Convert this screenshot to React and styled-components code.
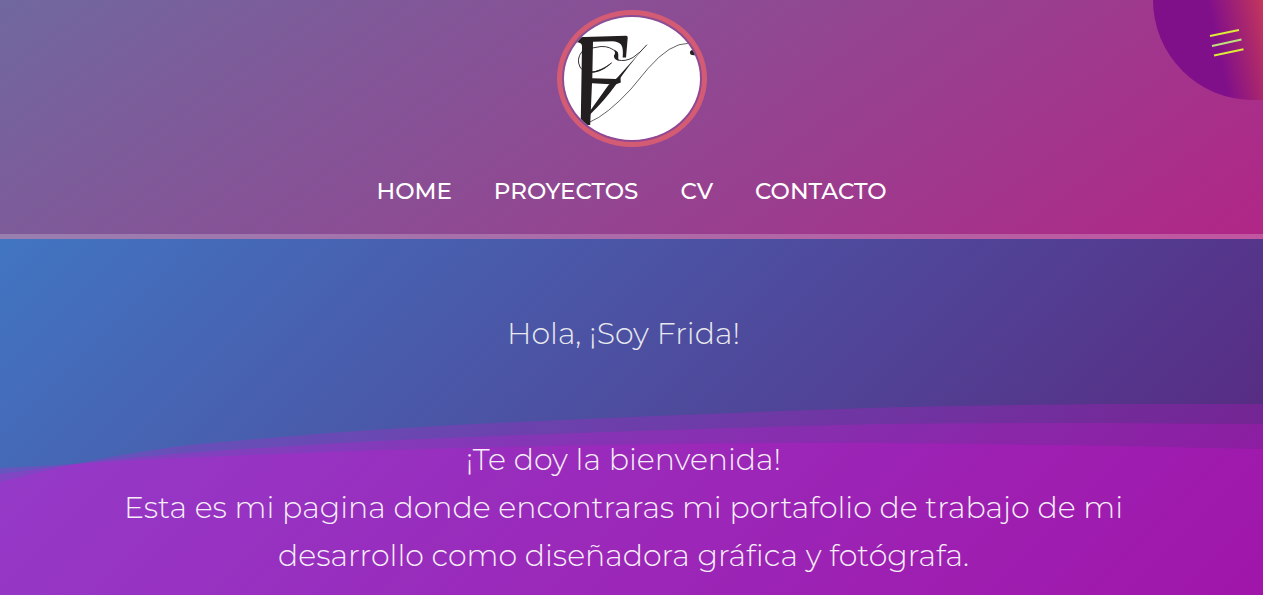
import React from "react";
import styled, { createGlobalStyle } from "styled-components";

const GlobalStyle = createGlobalStyle`
  * { box-sizing: border-box; }
  body {
    margin: 0;
    color: #fff;
    font-family: Montserrat, Inter, "Open Sans", sans-serif;
  }
`;

const Page = styled.div`
  position: relative;
  display: flex;
  flex-direction: column;
  min-height: 100vh;
  overflow: hidden;
`;

const Header = styled.header`
  display: flex;
  flex-direction: column;
  align-items: center;
  gap: 26px;
  padding: 10px 0 25px;
  border-bottom: 5px solid rgba(255, 255, 255, 0.22);
  background: linear-gradient(144deg, #70689e, #8c4c94 45%, #b12686) border-box;
`;

const LogoLink = styled.a`
  display: block;
  width: 150px;
  height: 137px;
  padding: 2px;
  border: 5px solid #d35b74;
  border-radius: 50%;

  svg {
    display: block;
    width: 100%;
    height: 100%;
    border-radius: 50%;
    background: #fff;
  }
`;

const Nav = styled.nav`
  display: flex;
  flex-wrap: wrap;
  justify-content: center;
  gap: 42px;
`;

const NavLink = styled.a`
  color: #fff;
  font-size: 23px;
  font-weight: 500;
  line-height: 36px;
  text-decoration: none;
`;

const MenuButton = styled.button`
  position: absolute;
  top: 0;
  right: 0;
  width: 110px;
  height: 100px;
  padding: 0;
  border: 0;
  border-radius: 0 0 0 100px;
  background: linear-gradient(78deg, #800f8a 58%, #c4365c);
  cursor: pointer;

  svg {
    display: block;
    width: 100%;
    height: 100%;
  }
`;

const Hero = styled.main`
  position: relative;
  flex: 1;
  padding: 71px 16px 16px 0;
  background: linear-gradient(135deg, #4175c1, #5a237b);
  text-align: center;
`;

const Waves = styled.svg`
  position: absolute;
  left: 0;
  bottom: 0;
  width: 100%;
  height: 192px;
`;

const Greeting = styled.h1`
  position: relative;
  margin: 0 0 78px;
  color: #e8e8ee;
  font-size: 30px;
  font-weight: 300;
  line-height: 48px;
`;

const Intro = styled.p`
  position: relative;
  max-width: 1040px;
  margin: 0 auto;
  color: #f6eef8;
  font-size: 30px;
  font-weight: 300;
  line-height: 48px;
`;

const waves = [
  [[0, 78], [75, 60], [140, 48], [200, 40], [420, 23], [840, 5], [1100, 0], [1263, 0]],
  [[0, 70], [75, 60], [140, 53], [200, 48], [420, 35], [840, 21], [1050, 19], [1263, 20]],
  [[0, 64], [75, 60], [140, 56], [200, 53], [420, 45], [780, 39], [1050, 41], [1263, 45]],
];

// Smooth curve through the points, closed along the bottom edge.
function wavePath(points) {
  let d = `M${points[0][0]} ${points[0][1]}`;
  for (let i = 0; i < points.length - 1; i++) {
    const p0 = points[i - 1] || points[i];
    const p1 = points[i];
    const p2 = points[i + 1];
    const p3 = points[i + 2] || p2;
    const w = p2[0] - p1[0];
    const s1 = (p2[1] - p0[1]) / (p2[0] - p0[0]);
    const s2 = (p3[1] - p1[1]) / (p3[0] - p1[0]);
    d += ` C${p1[0] + w / 3} ${p1[1] + (s1 * w) / 3} ${p2[0] - w / 3} ${p2[1] - (s2 * w) / 3} ${p2[0]} ${p2[1]}`;
  }
  return `${d} V192 H0 Z`;
}

const links = [
  ["HOME", "#home"],
  ["PROYECTOS", "#proyectos"],
  ["CV", "#cv"],
  ["CONTACTO", "#contacto"],
];

function Logo() {
  return (
    <svg viewBox="0 0 136 123" aria-hidden="true">
      <g fill="#231f20">
        <path d="M12 20.300 L62 18.700 Q64 18.700 63.700 21 L62 40.500 L58.700 40.500 Q59.500 31 57 27.500 Q54.500 24.500 48 24.300 L29 24.800 L28.300 61.200 L52 62 L56.500 60.500 L56.800 65.500 L51.500 67.500 L28 66.300 L26.200 108 L16.700 108 L18 29 Q18 25.500 12 25Z" />
        <path d="M82.700 28 L53 61 L44.500 68 L26 94 L26 97.500 Q41 83 51.700 68 Q63 50 82.700 28Z" />
        <path d="M50 32.500 C54 34.500 54.500 36 54.300 38.500 C54.500 40 53.800 42 55 43.500 C51.500 43.500 49.800 41 50 38.500 Q52 36 50 32.500Z" />
        <path d="M47.500 46 C40 54 30 57.500 21 54.500 C30 55.500 38 53 47.500 46Z" />
        <ellipse cx="128.500" cy="35.500" rx="2.500" ry="2.500" />
        <path d="M128 33.200 L136 37 L136 39 L128 38Z" />
      </g>
      <g fill="none" stroke="#231f20" strokeLinecap="round">
        <path d="M52 35 Q46 29 37 29.500 Q26 30.500 18 34.500 Q12 42 16 50 Q19 55 26 55.500 Q36 55 47.500 46" strokeWidth="0.9" />
        <path d="M54 43 Q61 45 69 40.500 Q76 36 82.700 28" strokeWidth="0.9" />
        <path d="M26 105 Q43 98 67 72 L84 51.500 Q106 26 124 26.300" strokeWidth="0.7" />
      </g>
    </svg>
  );
}

export default function App() {
  return (
    <Page>
      <GlobalStyle />
      <Header>
        <LogoLink href="#home" aria-label="Frida">
          <Logo />
        </LogoLink>
        <Nav>
          {links.map(([label, href]) => (
            <NavLink key={label} href={href}>{label}</NavLink>
          ))}
        </Nav>
      </Header>
      <MenuButton type="button" aria-label="Menú">
        <svg viewBox="0 0 110 100" fill="none" strokeWidth="2" aria-hidden="true">
          <path d="M57 36 L86 30" stroke="#dcec38" />
          <path d="M59 46 L88.500 39.500" stroke="#bfe07c" />
          <path d="M61 55.500 L90.500 49.300" stroke="#dcec38" />
        </svg>
      </MenuButton>
      <Hero>
        <Waves viewBox="0 0 1263 192" preserveAspectRatio="none" aria-hidden="true">
          {waves.map((points, i) => (
            <path key={i} d={wavePath(points)} fill="#e90cdc" fillOpacity="0.2" />
          ))}
        </Waves>
        <Greeting>Hola, ¡Soy Frida!</Greeting>
        <Intro>
          ¡Te doy la bienvenida!
          <br />
          Esta es mi pagina donde encontraras mi portafolio de trabajo de mi desarrollo como diseñadora gráfica y fotógrafa.
        </Intro>
      </Hero>
    </Page>
  );
}
